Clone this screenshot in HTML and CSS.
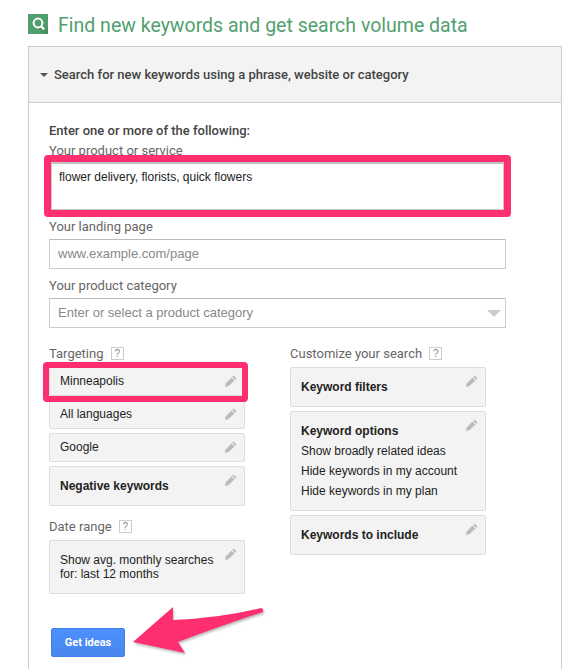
FILE: index.html
```html
<!DOCTYPE HTML>
<html>
<head>
  <meta name="viewport" content="width=device-width, initial-scale=1">
  <title>Find new keywords</title>
  <link rel="stylesheet" href="styles.css">
</head>
<body>
  <svg class="defs" width="0" height="0">
    <symbol id="pencil" viewBox="0 0 12 12">
      <path d="M8.6 0.4 L11.6 3.4 L10.2 4.8 L7.2 1.8 Z M6.5 2.5 L9.5 5.5 L3.2 11.2 L0 12 L0.6 8.6 Z"/>
    </symbol>
  </svg>

  <h1 class="title">
    <svg class="title-icon" width="20" height="20" viewBox="0 0 20 20">
      <rect width="20" height="20" fill="#4f9e6c"/>
      <path d="M10 14 L16 20 L20 20 L20 15 L14 9 Z" fill="#44905f"/>
      <circle cx="10" cy="9" r="4.4" fill="none" stroke="#fff" stroke-width="2"/>
      <path d="M13.2 12.2 L16.2 15.4" stroke="#fff" stroke-width="2.4"/>
    </svg>
    <span class="title-text">Find new keywords and get search volume data</span>
  </h1>

  <div class="panel">
    <div class="panel-head">
      <span class="caret"></span>
      Search for new keywords using a phrase, website or category
    </div>
    <div class="panel-body">
      <div class="intro">Enter one or more of the following:</div>

      <label class="label">Your product or service</label>
      <div class="field field-big">flower delivery, florists, quick flowers</div>

      <label class="label">Your landing page</label>
      <div class="field placeholder">www.example.com/page</div>

      <label class="label">Your product category</label>
      <div class="field placeholder">Enter or select a product category<span class="select-arrow"></span></div>

      <div class="columns">
        <div class="col">
          <div class="label col-label">Targeting <span class="help">?</span></div>
          <div class="box">Minneapolis<svg class="pencil"><use href="#pencil"/></svg></div>
          <div class="box">All languages<svg class="pencil"><use href="#pencil"/></svg></div>
          <div class="box">Google<svg class="pencil"><use href="#pencil"/></svg></div>
          <div class="box box-tall"><strong>Negative keywords</strong><svg class="pencil"><use href="#pencil"/></svg></div>

          <div class="label col-label date-label">Date range <span class="help">?</span></div>
          <div class="box box-date">Show avg. monthly searches<br>for: last 12 months<svg class="pencil"><use href="#pencil"/></svg></div>

          <button class="button">Get ideas</button>
        </div>

        <div class="col">
          <div class="label col-label">Customize your search <span class="help">?</span></div>
          <div class="box box-tall"><strong>Keyword filters</strong><svg class="pencil"><use href="#pencil"/></svg></div>
          <div class="box box-options">
            <strong>Keyword options</strong>
            <div>Show broadly related ideas</div>
            <div>Hide keywords in my account</div>
            <div>Hide keywords in my plan</div>
            <svg class="pencil"><use href="#pencil"/></svg>
          </div>
          <div class="box box-tall"><strong>Keywords to include</strong><svg class="pencil"><use href="#pencil"/></svg></div>
        </div>
      </div>
    </div>
  </div>

  <!-- annotations drawn over the screenshot -->
  <div class="mark mark-product"></div>
  <div class="mark mark-target"></div>
  <svg class="arrow" width="587" height="669" viewBox="0 0 587 669">
    <path d="M133 642 L173 607 L173 620 Q220 618 261 608 Q264 609 263 612 Q215 628 178 642 L185 653 Z" fill="#fe2f6e"/>
  </svg>
</body>
</html>
```

FILE: styles.css
```css
html, body {
  margin: 0;
  height: 669px;
  overflow: hidden;
}

body {
  position: relative;
  background-color: #fff;
  font-family: "Liberation Sans", Arial, sans-serif;
  font-size: 12px;
  color: #222;
}

.defs {
  position: absolute;
}

.title {
  display: flex;
  align-items: center;
  gap: 10px;
  height: 20px;
  margin: 0;
  padding: 14px 0 12px 28px;
  font-family: Roboto, sans-serif;
  font-size: 19.5px;
  font-weight: 400;
  color: #52a070;
}

.title-text {
  margin-top: 2px;
}

.panel {
  width: 532px;
  height: 623px;
  margin-left: 28px;
  border: 1px solid #ccc;
  border-bottom: none;
}

.panel-head {
  display: flex;
  align-items: center;
  height: 55px;
  padding-left: 11px;
  background-color: #f3f3f3;
  border-bottom: 1px solid #ccc;
  font-family: Roboto, sans-serif;
  font-size: 13px;
  font-weight: 500;
  color: #444;
}

.caret {
  width: 0;
  height: 0;
  margin-right: 6px;
  border-left: 4px solid transparent;
  border-right: 4px solid transparent;
  border-top: 4px solid #555;
}

.panel-body {
  padding: 20px 20px 0;
}

.intro {
  height: 20px;
  font-family: Roboto, sans-serif;
  font-size: 13px;
  font-weight: 500;
  line-height: 16px;
  color: #444;
}

.label {
  display: block;
  height: 20px;
  font-family: Roboto, sans-serif;
  font-size: 13px;
  line-height: 15px;
  color: #666;
}

.field {
  position: relative;
  box-sizing: border-box;
  width: 457px;
  height: 30px;
  margin-bottom: 9px;
  padding-left: 8px;
  border: 1px solid #ccc;
  border-top-color: #bbb;
  line-height: 27px;
  font-size: 12px;
  color: #222;
}

.field-big {
  height: 47px;
  padding-left: 9px;
  line-height: 27px;
}

.placeholder {
  font-size: 13px;
  color: #888;
}

.select-arrow {
  position: absolute;
  right: 4px;
  top: 11px;
  border-left: 7px solid transparent;
  border-right: 7px solid transparent;
  border-top: 7px solid #ccc;
}

.columns {
  display: flex;
  gap: 45px;
  margin-top: 18px;
}

.col {
  width: 196px;
}

.col-label {
  height: 21px;
}

.help {
  display: inline-block;
  box-sizing: border-box;
  width: 13px;
  height: 13px;
  margin-left: 4px;
  border: 1px solid #ccc;
  font-family: "Liberation Sans", Arial, sans-serif;
  font-size: 10px;
  line-height: 11px;
  text-align: center;
  color: #888;
  vertical-align: 1px;
}

.box {
  position: relative;
  box-sizing: border-box;
  height: 29px;
  margin-bottom: 4px;
  padding: 0 10px;
  background-color: #f3f3f3;
  border: 1px solid #ddd;
  border-radius: 2px;
  line-height: 26px;
}

.box-tall {
  height: 40px;
  line-height: 38px;
}

.box-date {
  height: 54px;
  margin-bottom: 34px;
  padding-top: 12px;
  line-height: 14px;
}

.box-options {
  height: 100px;
  padding-top: 9px;
  line-height: 20px;
}

.date-label {
  margin-top: 13px;
}

.pencil {
  position: absolute;
  top: 7px;
  right: 7px;
  width: 12px;
  height: 12px;
  fill: #bbb;
}

.button {
  display: block;
  width: 74px;
  height: 29px;
  margin-left: 2px;
  padding: 0;
  background: linear-gradient(#4d90fe, #4787ed);
  border: 1px solid #3d80ee;
  border-radius: 2px;
  font-family: Roboto, sans-serif;
  font-size: 11px;
  font-weight: 700;
  color: #fff;
}

/* annotations */
.mark {
  position: absolute;
  box-sizing: border-box;
  border: 6px solid #fe2f6e;
  border-radius: 4px;
}

.mark-product {
  left: 44px;
  top: 155px;
  width: 467px;
  height: 62px;
  border-width: 7px;
  box-shadow: inset 0 0 0 1px #c8c8c8;
}

.mark-target {
  left: 43px;
  top: 362px;
  width: 205px;
  height: 40px;
}

.arrow {
  position: absolute;
  left: 0;
  top: 0;
  pointer-events: none;
  filter: drop-shadow(1px 2px 1px rgba(0,0,0,0.25));
}
```
